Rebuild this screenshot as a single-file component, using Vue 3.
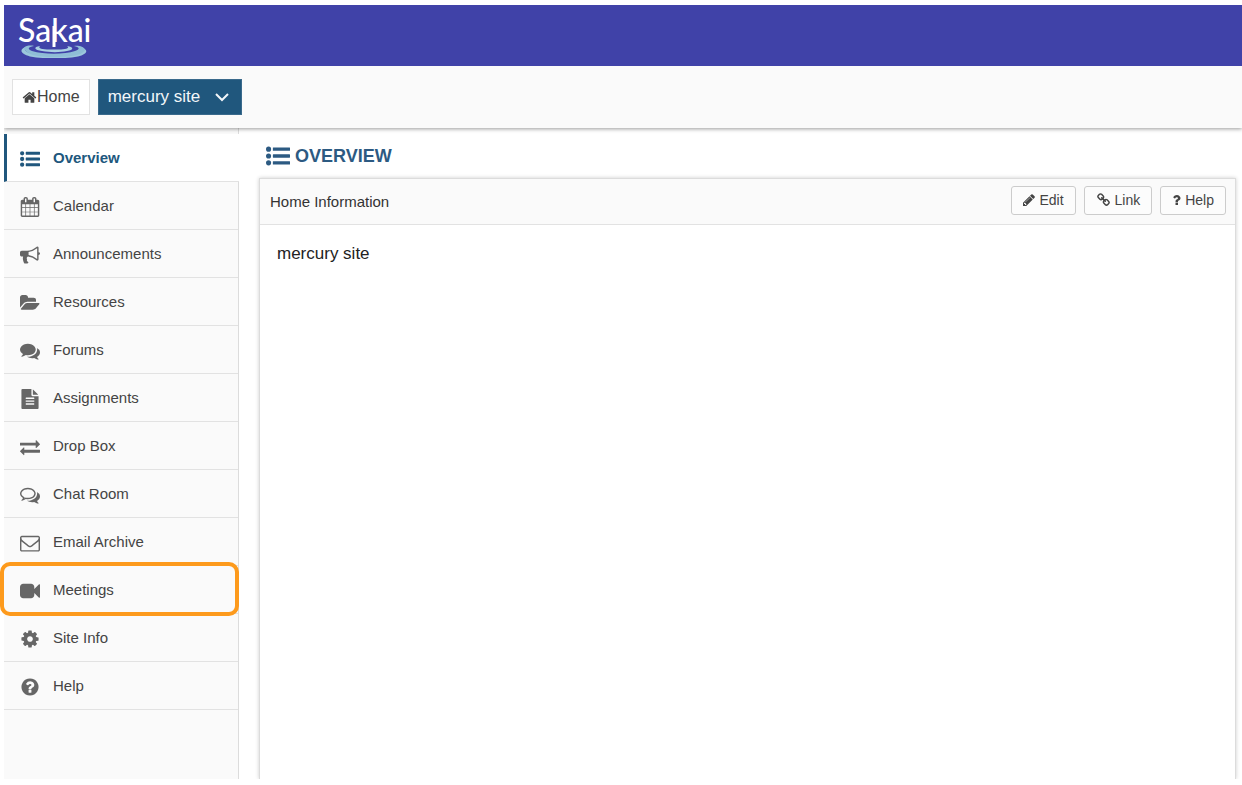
<script setup>
import { ref } from 'vue'

const icons = {
  list: 'M384 1408a192 192 0 1 1-384 0a192 192 0 1 1 384 0zm0-512a192 192 0 1 1-384 0a192 192 0 1 1 384 0zm0-512a192 192 0 1 1-384 0a192 192 0 1 1 384 0zM544 1280h1216q32 0 32 32v192q0 32-32 32h-1216q-32 0-32-32v-192q0-32 32-32zm0-512h1216q32 0 32 32v192q0 32-32 32h-1216q-32 0-32-32v-192q0-32 32-32zm0-512h1216q32 0 32 32v192q0 32-32 32h-1216q-32 0-32-32v-192q0-32 32-32z',
  home: 'M1472 992v480q0 26-19 45t-45 19h-384v-384h-256v384h-384q-26 0-45-19t-19-45v-480q0-1 .5-3t.5-3l575-474 575 474q1 2 1 6zm223-69l-62 74q-8 9-21 11h-3q-13 0-21-7l-692-577-692 577q-12 8-24 7-13-2-21-11l-62-74q-8-10-7-23.5t11-21.5l719-599q32-26 76-26t76 26l244 204v-195q0-14 9-23t23-9h192q14 0 23 9t9 23v408l219 182q10 8 11 21.5t-7 23.5z',
  calendar: 'M192 1664h288v-288h-288v288zm352 0h320v-288h-320v288zm-352-352h288v-320h-288v320zm352 0h320v-320h-320v320zm-352-384h288v-288h-288v288zm736 736h320v-288h-320v288zm-384-736h320v-288h-320v288zm768 736h288v-288h-288v288zm-384-352h320v-320h-320v320zm-352-864v-288q0-13-9.5-22.5t-22.5-9.5h-64q-13 0-22.5 9.5t-9.5 22.5v288q0 13 9.5 22.5t22.5 9.5h64q13 0 22.5-9.5t9.5-22.5zm736 864h288v-320h-288v320zm-384-384h320v-288h-320v288zm384 0h288v-288h-288v288zm32-480v-288q0-13-9.5-22.5t-22.5-9.5h-64q-13 0-22.5 9.5t-9.5 22.5v288q0 13 9.5 22.5t22.5 9.5h64q13 0 22.5-9.5t9.5-22.5zm384-64v1280q0 52-38 90t-90 38h-1408q-52 0-90-38t-38-90v-1280q0-52 38-90t90-38h128v-96q0-66 47-113t113-47h64q66 0 113 47t47 113v96h384v-96q0-66 47-113t113-47h64q66 0 113 47t47 113v96h128q52 0 90 38t38 90z',
  bullhorn: 'M1664 640q53 0 90.5 37.5t37.5 90.5-37.5 90.5-90.5 37.5v384q0 52-38 90t-90 38q-417-347-812-380-58 19-91 66t-31 100.5 40 92.5q-20 33-23 65.5t6 58 33.5 55 48 50 61.5 50.5q-29 58-111.5 83t-168.5 11.5-132-55.5q-7-23-29.5-87.5t-32-94.5-23-89-15-101 3.5-98.5 22-110.5h-122q-66 0-113-47t-47-113v-192q0-66 47-113t113-47h480q435 0 896-384 52 0 90 38t38 90v384zm-128 604v-954q-394 302-768 343v270q377 42 768 341z',
  folder: 'M1879 952q0 31-31 66l-336 396q-43 51-120.5 86.5t-143.5 35.5h-1088q-34 0-60.5-13t-26.5-43q0-31 31-66l336-396q43-51 120.5-86.5t143.5-35.5h1088q34 0 60.5 13t26.5 43zm-343-344v160h-832q-94 0-197 47.5t-164 119.5l-337 396-5 6q0-4-.5-12.5t-.5-12.5v-960q0-92 66-158t158-66h320q92 0 158 66t66 158v32h544q92 0 158 66t66 158z',
  comments: 'M1408 768q0 139-94 257t-256.5 186.5-353.5 68.5q-86 0-176-16-124 88-278 128-36 9-86 16h-3q-11 0-20.5-8t-11.5-21q-1-3-1-6.5t.5-6.5 2-6l2.5-5 3.5-5.5 4-5 4.5-5 4-4.5q5-6 23-25t26-29.5 22.5-29 25-38.5 20.5-44q-124-72-195-177t-71-224q0-139 94-257t256.5-186.5 353.5-68.5 353.5 68.5 256.5 186.5 94 257zm384 256q0 120-71 224.5t-195 176.5q10 24 20.5 44t25 38.5 22.5 29 26 29.5 23 25q1 1 4 4.5t4.5 5 4 5 3.5 5.5l2.5 5 2 6 .5 6.5-1 6.5q-3 14-13 22t-22 7q-50-7-86-16-154-40-278-128-90 16-176 16-271 0-472-132 58 4 88 4 161 0 309-45t264-129q125-92 192-212t67-254q0-77-23-152 129 71 204 178t75 230z',
  file: 'M1596 476q14 14 28 36h-472v-472q22 14 36 28zm-476 164h544v1056q0 40-28 68t-68 28h-1344q-40 0-68-28t-28-68v-1600q0-40 28-68t68-28h800v544q0 40 28 68t68 28zm160 736v-64q0-14-9-23t-23-9h-704q-14 0-23 9t-9 23v64q0 14 9 23t23 9h704q14 0 23-9t9-23zm0-256v-64q0-14-9-23t-23-9h-704q-14 0-23 9t-9 23v64q0 14 9 23t23 9h704q14 0 23-9t9-23zm0-256v-64q0-14-9-23t-23-9h-704q-14 0-23 9t-9 23v64q0 14 9 23t23 9h704q14 0 23-9t9-23z',
  exchange: 'M1792 1184v192q0 13-9.5 22.5t-22.5 9.5h-1376v192q0 13-9.5 22.5t-22.5 9.5q-12 0-24-10l-319-320q-9-9-9-22 0-14 9-23l320-320q9-9 23-9 13 0 22.5 9.5t9.5 22.5v192h1376q13 0 22.5 9.5t9.5 22.5zm0-544q0 14-9 23l-320 320q-9 9-23 9-13 0-22.5-9.5t-9.5-22.5v-192h-1376q-13 0-22.5-9.5t-9.5-22.5v-192q0-13 9.5-22.5t22.5-9.5h1376v-192q0-14 9-23t23-9q12 0 24 10l319 319q9 9 9 23z',
  chat: 'M704 384q-153 0-286 52t-211.5 141-78.5 191q0 82 53 158t149 132l97 56-35 84q34-20 62-39l44-31 53 10q78 14 153 14 153 0 286-52t211.5-141 78.5-191-78.5-191-211.5-141-286-52zm0-128q191 0 353.5 68.5t256.5 186.5 94 257-94 257-256.5 186.5-353.5 68.5q-86 0-176-16-124 88-278 128-36 9-86 16h-3q-11 0-20.5-8t-11.5-21q-1-3-1-6.5t.5-6.5 2-6l2.5-5 3.5-5.5 4-5 4.5-5 4-4.5q5-6 23-25t26-29.5 22.5-29 25-38.5 20.5-44q-124-72-195-177t-71-224q0-139 94-257t256.5-186.5 353.5-68.5zm822 1169q10 24 20.5 44t25 38.5 22.5 29 26 29.5 23 25q1 1 4 4.5t4.5 5 4 5 3.5 5.5l2.5 5 2 6 .5 6.5-1 6.5q-3 14-13 22t-22 7q-50-7-86-16-154-40-278-128-90 16-176 16-271 0-472-132 58 4 88 4 161 0 309-45t264-129q125-92 192-212t67-254q0-77-23-152 129 71 204 178t75 230q0 120-71 224.5t-195 176.5z',
  envelope: 'M1664 1504v-768q-32 36-69 66-268 206-426 338-51 43-83 67t-86.5 48.5-102.5 24.5h-2q-48 0-102.5-24.5t-86.5-48.5-83-67q-158-132-426-338-37-30-69-66v768q0 13 9.5 22.5t22.5 9.5h1472q13 0 22.5-9.5t9.5-22.5zm0-1051v-24.5l-.5-13-3-12.5-5.5-9-9-7.5-14-2.5h-1472q-13 0-22.5 9.5t-9.5 22.5q0 168 147 284 193 152 401 317 6 5 35 29.5t46 37.5 44.5 31.5 50.5 27.5 43 9h2q20 0 43-9t50.5-27.5 44.5-31.5 46-37.5 35-29.5q208-165 401-317 54-43 100.5-115.5t46.5-131.5zm128-37v1088q0 66-47 113t-113 47h-1472q-66 0-113-47t-47-113v-1088q0-66 47-113t113-47h1472q66 0 113 47t47 113z',
  video: 'M1792 352v1088q0 42-39 59-13 5-25 5-27 0-45-19l-403-403v166q0 119-84.5 203.5t-203.5 84.5h-704q-119 0-203.5-84.5t-84.5-203.5v-704q0-119 84.5-203.5t203.5-84.5h704q119 0 203.5 84.5t84.5 203.5v165l403-402q18-19 45-19 12 0 25 5 39 17 39 59z',
  cog: 'M1152 896q0-106-75-181t-181-75-181 75-75 181 75 181 181 75 181-75 75-181zm512-109v222q0 12-8 23t-20 13l-185 28q-19 54-39 91 35 50 107 138 10 12 10 25t-9 23q-27 37-99 108t-94 71q-12 0-26-9l-138-108q-44 23-91 38-16 136-29 186-7 28-36 28h-222q-14 0-24.5-8.5t-11.5-21.5l-28-184q-49-16-90-37l-141 107q-10 9-25 9-14 0-25-11-126-114-165-168-7-10-7-23 0-12 8-23 15-21 51-66.5t54-70.5q-27-50-41-99l-183-27q-13-2-21-12.5t-8-23.5v-222q0-12 8-23t19-13l186-28q14-46 39-92-40-57-107-138-10-12-10-24 0-10 9-23 26-36 98.5-107.5t94.5-71.5q13 0 26 10l138 107q44-23 91-38 16-136 29-186 7-28 36-28h222q14 0 24.5 8.5t11.5 21.5l28 184q49 16 90 37l142-107q9-9 24-9 13 0 25 10 129 119 165 170 7 8 7 22 0 12-8 23-15 21-51 66.5t-54 70.5q26 50 41 98l183 28q13 2 21 12.5t8 23.5z',
  questionCircle: 'M1024 1376v-192q0-14-9-23t-23-9h-192q-14 0-23 9t-9 23v192q0 14 9 23t23 9h192q14 0 23-9t9-23zm256-672q0-88-55.5-163t-138.5-116-170-41q-243 0-371 213-15 24 8 42l132 100q7 6 19 6 16 0 25-12 53-68 86-92 34-24 86-24 48 0 85.5 26t37.5 59q0 38-20 61t-68 45q-63 28-115.5 86.5t-52.5 125.5v36q0 14 9 23t23 9h192q14 0 23-9t9-23q0-19 21.5-49.5t54.5-49.5q32-18 49-28.5t46-35 44.5-48 28-60.5 12.5-81zm384 192q0 209-103 385.5t-279.5 279.5-385.5 103-385.5-103-279.5-279.5-103-385.5 103-385.5 279.5-279.5 385.5-103 385.5 103 279.5 279.5 103 385.5z',
  question: 'M1088 1256v240q0 16-12 28t-28 12h-240q-16 0-28-12t-12-28v-240q0-16 12-28t28-12h240q16 0 28 12t12 28zm316-600q0 54-15.5 101t-35 76.5-55 59.5-57.5 43.5-61 35.5q-41 23-68.5 65t-27.5 67q0 17-12 32.5t-28 15.5h-240q-15 0-25.5-18.5t-10.5-37.5v-45q0-83 65-156.5t143-108.5q59-27 84-56t25-76q0-42-46.5-74t-107.5-32q-65 0-108 29-35 25-107 115-13 16-31 16-12 0-25-8l-164-125q-13-10-15.5-25t5.5-28q160-266 464-266 80 0 161 31t146 83 106 127.5 41 158.5z',
  pencil: 'M491 1536l91-91-235-235-91 91v107h128v128h107zm523-928q0-22-22-22-10 0-17 7l-542 542q-7 7-7 17 0 22 22 22 10 0 17-7l542-542q7-7 7-17zm-54-192l416 416-832 832h-416v-416zm683 96q0 53-37 90l-166 166-416-416 166-165q36-38 90-38 53 0 91 38l235 234q37 39 37 91z',
  link: 'M1520 1216q0-40-28-68l-208-208q-28-28-68-28-42 0-72 32 3 3 19 18.5t21.5 21.5 15 19 13 25.5 3.5 27.5q0 40-28 68t-68 28q-15 0-27.5-3.5t-25.5-13-19-15-21.5-21.5-18.5-19q-33 31-33 73 0 40 28 68l206 207q27 27 68 27 40 0 68-26l147-146q28-28 28-67zm-703-705q0-40-28-68l-206-207q-28-28-68-28-39 0-68 27l-147 146q-28 28-28 67 0 40 28 68l208 208q27 27 68 27 42 0 72-31-3-3-19-18.5t-21.5-21.5-15-19-13-25.5-3.5-27.5q0-40 28-68t68-28q15 0 27.5 3.5t25.5 13 19 15 21.5 21.5 18.5 19q33-31 33-73zm895 705q0 120-85 203l-147 146q-83 83-203 83-121 0-204-85l-206-207q-83-83-83-203 0-123 88-209l-88-88q-86 88-208 88-120 0-204-84l-208-208q-84-84-84-204t85-203l147-146q83-83 203-83 121 0 204 85l206 207q83 83 83 203 0 123-88 209l88 88q86-88 208-88 120 0 204 84l208 208q84 84 84 204z'
}

const tools = [
  { name: 'Overview', icon: 'list' },
  { name: 'Calendar', icon: 'calendar' },
  { name: 'Announcements', icon: 'bullhorn' },
  { name: 'Resources', icon: 'folder', box: '0 0 1920 1792' },
  { name: 'Forums', icon: 'comments' },
  { name: 'Assignments', icon: 'file' },
  { name: 'Drop Box', icon: 'exchange' },
  { name: 'Chat Room', icon: 'chat' },
  { name: 'Email Archive', icon: 'envelope' },
  { name: 'Meetings', icon: 'video', highlighted: true },
  { name: 'Site Info', icon: 'cog' },
  { name: 'Help', icon: 'questionCircle' }
]
const actions = [
  { name: 'Edit', icon: 'pencil', box: '128 0 1536 1792' },
  { name: 'Link', icon: 'link', box: '0 0 1792 1792' },
  { name: 'Help', icon: 'question', box: '320 0 1152 1792' }
]
const current = ref('Overview')
</script>

<template>
  <div class="page">
    <header class="banner">
      <a href="#" class="logo">
        <svg class="ripple" viewBox="0 0 68 36" aria-hidden="true">
          <path d="M8 24C-2 27 0 32 10 34.500C24 37 44 37 58 34.500C68 32 70 27 58 24.500C66 28 62 31 54 32C42 34 26 34 14 32C5 30.500 2 27 8 24z" fill="#9cc7dc" />
          <path d="M4 26C6 23 12 23.500 14 24C8 25 7 27 12 29C24 32.500 44 32.500 55 29C61 27 59 25 54 24C58 23.500 64 24 65 28C62 34 48 35 34 35C18 35 6 33 4 26z" fill="#8fbdd6" />
          <path d="M20 24C13 25 14 28 22 29C30 30.500 40 30.500 47 29C54 28 54 25 47 24C50 26 47 27 41 27.500H27C20 27 18 26 20 24z" fill="#a9d0e2" />
          <path d="M34 4V25" stroke="#fff" stroke-width="3" />
        </svg>
        <span class="wordmark">Sakai</span>
      </a>
    </header>
    <nav class="sites" aria-label="Sites">
      <a href="#" class="site">
        <svg class="home-icon" viewBox="0 0 1792 1792" aria-hidden="true"><path :d="icons.home" /></svg>Home
      </a>
      <button type="button" class="site current">
        mercury site
        <svg class="chevron" viewBox="0 0 14 14" aria-hidden="true"><path d="M1 4l6 6 6-6" /></svg>
      </button>
    </nav>
    <div class="body">
      <nav class="tools" aria-label="Tools">
        <ul>
          <li v-for="tool in tools" :key="tool.name" :class="{ active: tool.name === current, highlighted: tool.highlighted }">
            <a href="#" @click.prevent="current = tool.name">
              <svg class="tool-icon" :viewBox="tool.box || '0 0 1792 1792'" aria-hidden="true"><path :d="icons[tool.icon]" /></svg>
              {{ tool.name }}
            </a>
          </li>
        </ul>
      </nav>
      <main class="content">
        <h1>
          <svg viewBox="0 0 1792 1792" aria-hidden="true"><path :d="icons.list" /></svg>
          OVERVIEW
        </h1>
        <section class="panel">
          <div class="panel-head">
            <h2>Home Information</h2>
            <div class="actions">
              <button v-for="a in actions" :key="a.name" type="button">
                <svg :class="a.icon" :viewBox="a.box" aria-hidden="true"><path :d="icons[a.icon]" /></svg>
                {{ a.name }}
              </button>
            </div>
          </div>
          <p>mercury site</p>
        </section>
      </main>
    </div>
  </div>
</template>

<style>
body {
  margin: 0;
  background: #fff;
}
</style>

<style scoped>
.page {
  box-sizing: border-box;
  min-height: 100vh;
  padding: 5px 0 6px 4px;
  display: flex;
  flex-direction: column;
  font-family: "Liberation Sans", Arial, sans-serif;
  font-size: 15px;
  color: #333;
}
a {
  color: inherit;
  text-decoration: none;
}
svg {
  flex: none;
  fill: currentColor;
}
.banner {
  display: flex;
  height: 61px;
  background: #4042a8;
}
.logo {
  position: relative;
  margin-left: 14px;
  padding-top: 7px;
  color: #fff;
  font-family: Lato, sans-serif;
  font-size: 32px;
  font-weight: 500;
  line-height: 36px;
}
.wordmark {
  position: relative;
}
.ripple {
  position: absolute;
  left: 2px;
  top: 17px;
  width: 68px;
  height: 36px;
}
.sites {
  position: relative;
  z-index: 1;
  box-sizing: border-box;
  display: flex;
  gap: 8px;
  height: 62px;
  padding: 13px 8px;
  background: #fafafa;
  box-shadow: 0 1px 4px rgba(0, 0, 0, 0.4);
  clip-path: inset(0 0 -8px 0);
}
.site {
  box-sizing: border-box;
  display: flex;
  align-items: center;
  height: 36px;
  padding: 0 9px;
  border: 1px solid #e2e2e2;
  background: #fff;
  color: #444;
  font-family: inherit;
  font-size: 16px;
}
.site.current {
  gap: 15px;
  padding: 0 12px 0 9px;
  border-color: #3a6a8c;
  background: #20577d;
  color: #f2f6f9;
  font-size: 17px;
}
.home-icon {
  width: 15px;
  height: 15px;
}
.chevron {
  width: 14px;
  height: 14px;
  fill: none;
  stroke: currentColor;
  stroke-width: 2;
}
.body {
  flex: 1;
  display: flex;
}
.tools {
  box-sizing: border-box;
  width: 235px;
  padding-top: 6px;
  border-right: 1px solid #dcdcdc;
  background: #fafafa;
}
.tools ul {
  margin: 0;
  padding: 0;
  list-style: none;
}
.tools li {
  position: relative;
}
.tools a {
  box-sizing: border-box;
  display: flex;
  align-items: center;
  gap: 13px;
  height: 48px;
  padding-left: 16px;
  border-bottom: 1px solid #e2e2e2;
  color: #444;
}
.tool-icon {
  width: 20px;
  height: 20px;
  margin-top: 2px;
  color: #666;
}
.tools .active a {
  margin-right: -1px;
  padding-left: 13px;
  border-left: 3px solid #20577d;
  background: #fff;
  color: #20577d;
  font-weight: bold;
}
.active .tool-icon {
  color: #20577d;
}
.highlighted::after {
  content: "";
  position: absolute;
  inset: -4px -1px -2px -4px;
  border: 4px solid #fd9a1c;
  border-radius: 10px;
  pointer-events: none;
}
.content {
  flex: 1;
  display: flex;
  flex-direction: column;
  padding: 14px 6px 0 20px;
  overflow: hidden;
}
h1 {
  display: flex;
  align-items: center;
  gap: 5px;
  margin: 0 0 8px;
  padding-left: 7px;
  color: #2c5a82;
  font-size: 18px;
  line-height: 28px;
}
h1 svg {
  width: 24px;
  height: 24px;
}
.panel {
  flex: 1;
  border: 1px solid #dcdcdc;
  border-bottom: 0;
  box-shadow: 0 0 4px rgba(0, 0, 0, 0.2);
}
.panel-head {
  display: flex;
  align-items: center;
  justify-content: space-between;
  height: 45px;
  padding: 0 9px 0 10px;
  border-bottom: 1px solid #e2e2e2;
  background: #fafafa;
}
h2 {
  margin: 0;
  font-size: 15px;
  font-weight: normal;
}
.actions {
  display: flex;
  gap: 8px;
  padding-bottom: 3px;
}
.actions button {
  display: flex;
  align-items: center;
  gap: 4px;
  height: 29px;
  padding: 0 11px;
  border: 1px solid #ccc;
  border-radius: 3px;
  background: #fcfcfc;
  color: #444;
  font-family: inherit;
  font-size: 14px;
}
.actions svg {
  width: 12px;
  height: 14px;
}
.actions svg.link {
  width: 15px;
}
.actions svg.question {
  width: 9px;
}
.panel p {
  margin: 0;
  padding: 19px 17px;
  color: #222;
  font-size: 17px;
  line-height: 20px;
}
</style>
